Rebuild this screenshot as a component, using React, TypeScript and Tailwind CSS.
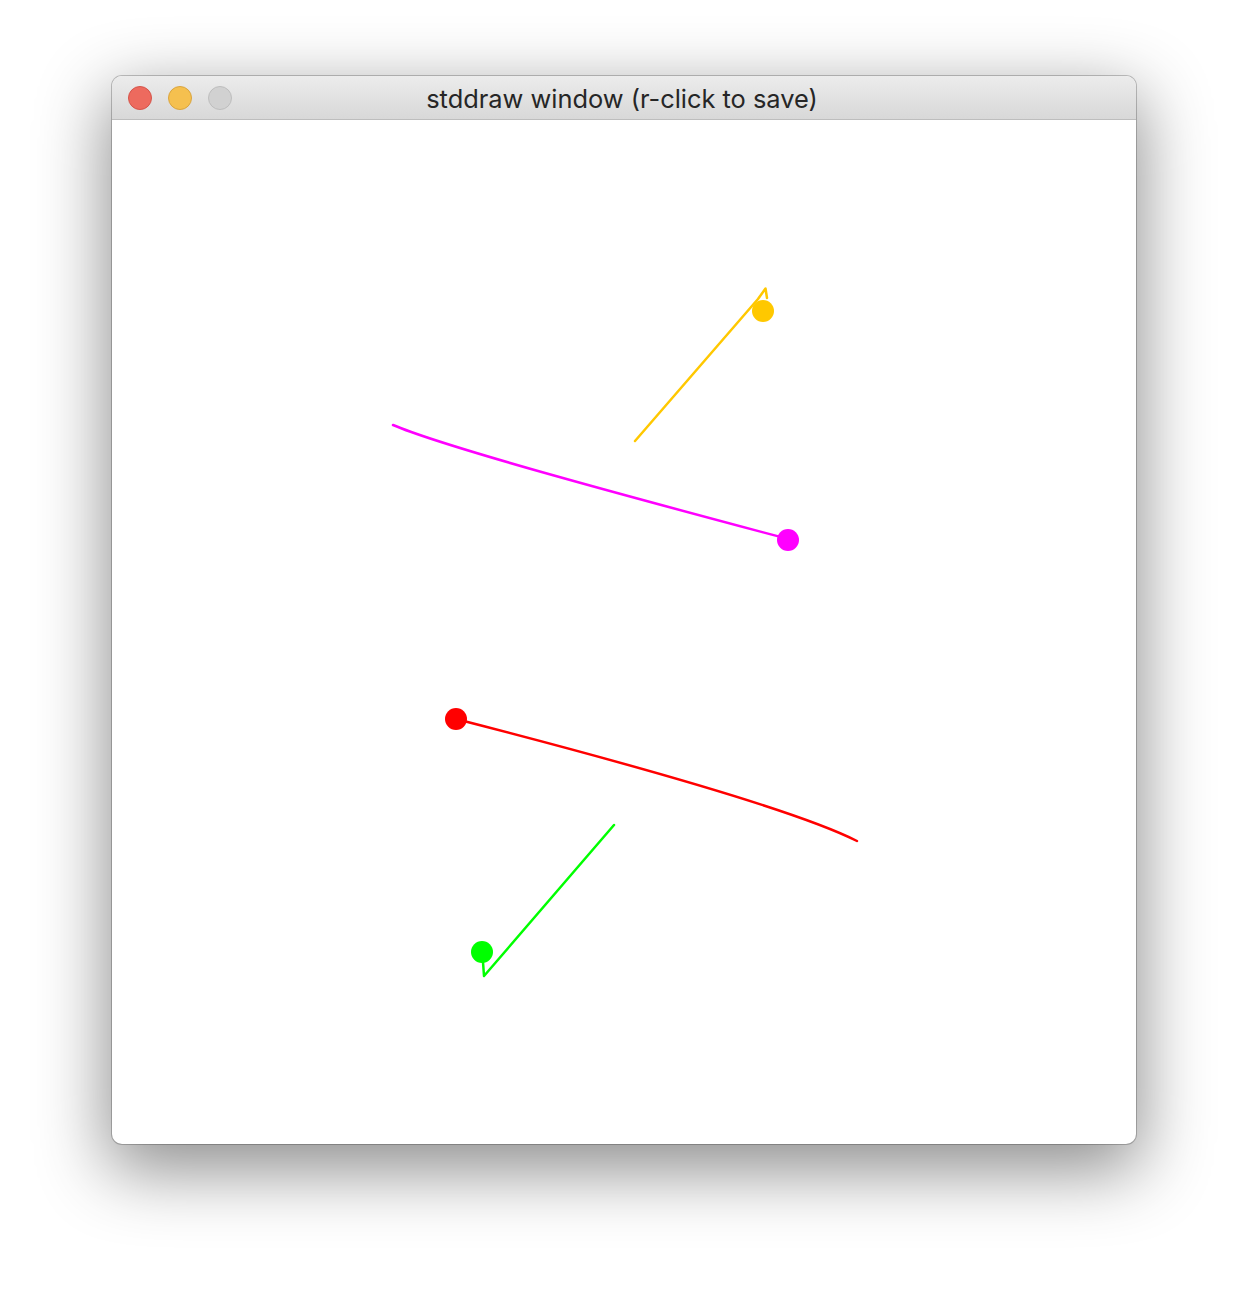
import React from "react";

// linhas e pontos do desenho, em coordenadas do canvas (1024x1024)
const strokes = [
  { color: "#FFC800", d: "M523 321 L646 179 L653.5 168.5 L655 178" },
  { color: "#FF00FF", d: "M281 305 C340 330 560 388 676 419" },
  { color: "#FF0000", d: "M344 599 C480 634 680 688 745 721" },
  { color: "#00FF00", d: "M502 705 L372 856 L371 842" },
];

const dots = [
  { color: "#FFC800", x: 651, y: 191 },
  { color: "#FF00FF", x: 676, y: 420 },
  { color: "#FF0000", x: 344, y: 599 },
  { color: "#00FF00", x: 370, y: 832 },
];

function TrafficLights() {
  return (
    <div className="flex items-center gap-4 pl-4">
      <span className="block h-6 w-6 rounded-full bg-[#ED6A5E] border border-[#D4544A]" />
      <span className="block h-6 w-6 rounded-full bg-[#F5C04F] border border-[#D9A43F]" />
      <span className="block h-6 w-6 rounded-full bg-[#D1D1D1] border border-[#BDBDBD]" />
    </div>
  );
}

export default function App() {
  return (
    <div className="w-[1248px] h-[1292px] bg-white pt-[76px] pl-[112px]">
      <div className="w-[1024px] rounded-[10px] overflow-hidden bg-white shadow-[0_0_0_1px_rgba(0,0,0,0.22),0_22px_70px_4px_rgba(0,0,0,0.45)]">
        {/* barra de titulo */}
        <div className="relative h-[44px] flex items-center bg-gradient-to-b from-[#ECECEC] to-[#D8D8D8] border-b border-[#BDBDBD]">
          <TrafficLights />
          <div
            className="absolute inset-0 flex items-center justify-center text-[25.4px] text-[#262626] pointer-events-none"
            style={{ fontFamily: "Inter, 'Noto Sans', sans-serif" }}
          >
            <span className="translate-x-[-2px] translate-y-[2px]">stddraw window (r-click to save)</span>
          </div>
        </div>

        {/* area de desenho */}
        <svg width="1024" height="1024" viewBox="0 0 1024 1024" className="block">
          {strokes.map((s, i) => (
            <path key={i} d={s.d} fill="none" stroke={s.color} strokeWidth={2.5} strokeLinejoin="round" strokeLinecap="round" />
          ))}
          {dots.map((p, i) => (
            <circle key={i} cx={p.x} cy={p.y} r={11} fill={p.color} />
          ))}
        </svg>
      </div>
    </div>
  );
}
